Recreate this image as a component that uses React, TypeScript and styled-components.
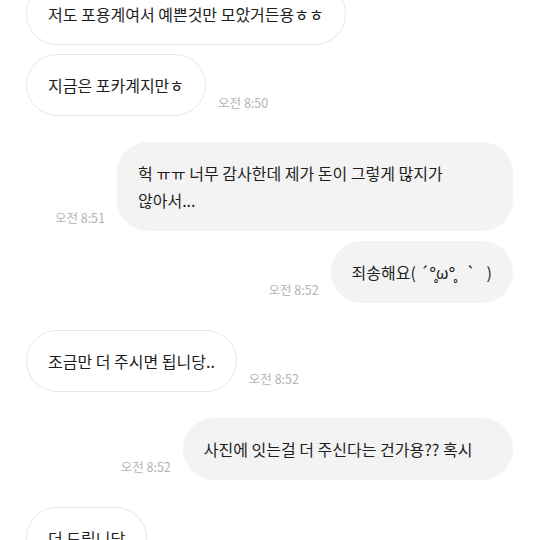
import React from "react";
import styled, { createGlobalStyle } from "styled-components";

const Global = createGlobalStyle`
  html, body { margin: 0; padding: 0; background: #ffffff; }
  body { font-family: "Noto Sans CJK KR", "Noto Sans", sans-serif; }
`;

const Chat = styled.div`
  width: 540px;
  height: 540px;
  overflow: hidden;
  background: #ffffff;
`;

const List = styled.div`
  display: flex;
  flex-direction: column;
  margin-top: -17px;
  padding: 0 27px 0 26px;
`;

const Row = styled.div<{ $mine?: boolean; $gap: number }>`
  display: flex;
  align-items: flex-end;
  justify-content: ${(p) => (p.$mine ? "flex-end" : "flex-start")};
  gap: 12px;
  margin-top: ${(p) => p.$gap}px;
`;

const Bubble = styled.div<{ $mine?: boolean }>`
  box-sizing: border-box;
  max-width: 396px;
  padding: ${(p) => (p.$mine ? "17.5px 21px" : "16.5px 21px")};
  border-radius: 31px;
  background: ${(p) => (p.$mine ? "#f3f3f3" : "#ffffff")};
  border: ${(p) => (p.$mine ? "none" : "1px solid #e6e6e6")};
  color: #1e1e1e;
  font-size: 16px;
  line-height: 27px;
  word-break: keep-all;
  white-space: pre-wrap;
`;

const Time = styled.span`
  flex: none;
  font-family: "Noto Sans CJK KR", "Noto Sans", sans-serif;
  font-size: 12.5px;
  line-height: 14px;
  color: #b3b3b3;
  padding-bottom: 6px;
`;

type Msg = { text: string; mine?: boolean; time?: string; gap: number };

const messages: Msg[] = [
  { text: "저도 포용계여서 예쁜것만 모았거든용ㅎㅎ", gap: 0 },
  { text: "지금은 포카계지만ㅎ", time: "오전 8:50", gap: 9 },
  { text: "헉 ㅠㅠ 너무 감사한데 제가 돈이 그렇게 많지가 않아서...", mine: true, time: "오전 8:51", gap: 26 },
  { text: "죄송해요(\u00a0´°̥ω°̥\u00a0\u00a0\u00a0`\u00a0\u00a0\u00a0)", mine: true, time: "오전 8:52", gap: 10 },
  { text: "조금만 더 주시면 됩니당..", time: "오전 8:52", gap: 27 },
  { text: "사진에 잇는걸 더 주신다는 건가용?? 혹시\u3000\u00a0", mine: true, time: "오전 8:52", gap: 26 },
  { text: "더 드립니당", gap: 27 },
];

export default function App() {
  return (
    <Chat>
      <Global />
      <List>
        {messages.map((m, i) => (
          <Row key={i} $mine={m.mine} $gap={m.gap}>
            {m.mine && m.time && <Time>{m.time}</Time>}
            <Bubble $mine={m.mine}>{m.text}</Bubble>
            {!m.mine && m.time && <Time>{m.time}</Time>}
          </Row>
        ))}
      </List>
    </Chat>
  );
}
